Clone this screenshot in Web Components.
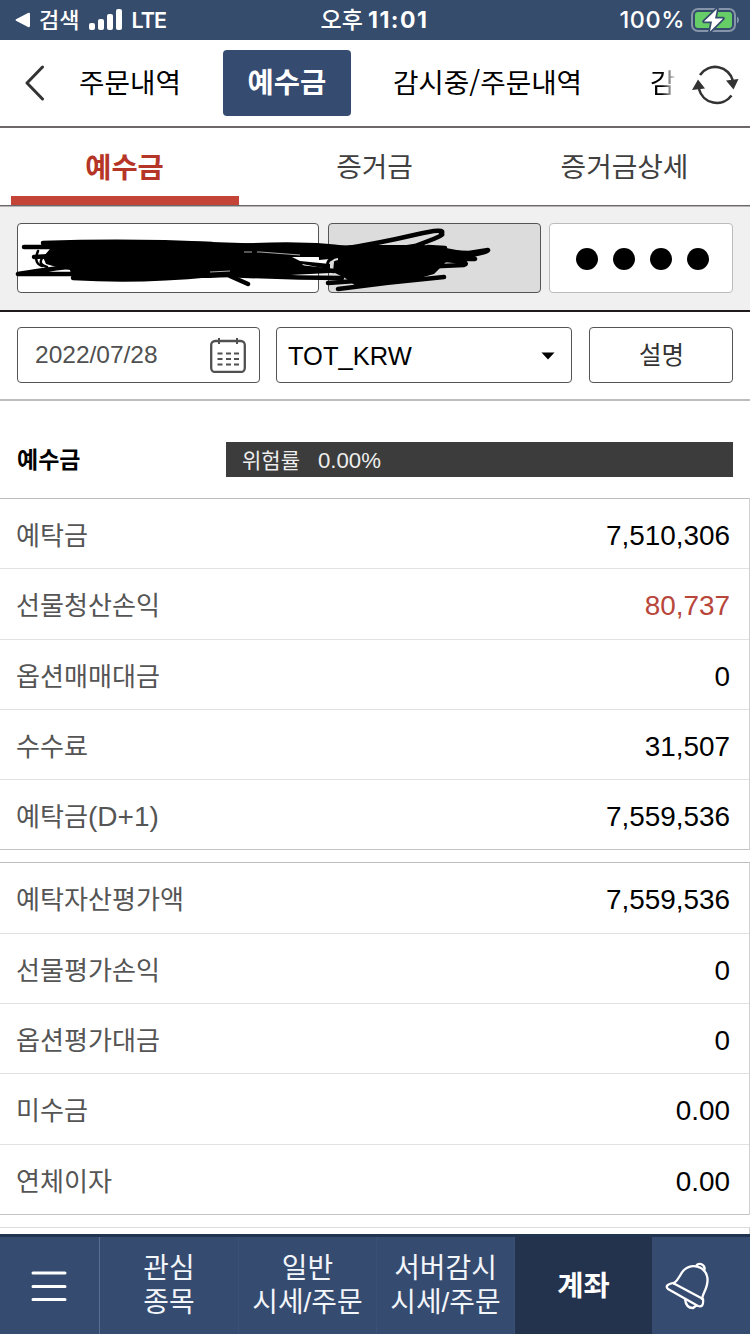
<!DOCTYPE html>
<html lang="ko">
<head>
<meta charset="utf-8">
<title>예수금</title>
<style>
  body {
    margin: 0;
    background: #fff;
    font-family: "Liberation Sans", "Noto Sans CJK KR", sans-serif;
  }
</style>
</head>
<body>
<account-app></account-app>

<script>
class StatusBar extends HTMLElement {
  constructor() {
    super();
    this.attachShadow({ mode: "open" });
  }

  static get styles() {
    return /* css */`
      :host {
        display: grid;
        grid-template-columns: 1fr auto 1fr;
        align-items: center;
        box-sizing: border-box;
        height: 40px;
        padding: 0 11px 0 15px;
        background: #364c6c;
        color: #fff;
        font: 500 22px/40px Inter, "Noto Sans CJK KR", sans-serif;
        white-space: nowrap;
      }

      .side {
        display: flex;
        align-items: center;
        height: 40px;
      }

      .right { justify-content: flex-end; }
      .arrow { margin-right: 9px; }
      .bars { margin: 0 8px 0 10px; }
      .net { font-weight: 600; font-size: 21.500px; letter-spacing: -0.9px; }
      .time { margin-right: 5px; font-size: 23px; }
      .level { font-size: 23.500px; letter-spacing: 0.5px; }
      .battery { margin-left: 6px; }
      b { font-weight: 700; font-size: 23px; letter-spacing: 1.500px; margin-left: -1px; }
      svg { display: block; }
    `;
  }

  connectedCallback() {
    this.shadowRoot.innerHTML = /* html */`
    <style>${StatusBar.styles}</style>
    <div class="side">
      <svg class="arrow" width="15" height="16" viewBox="0 0 15 16"><path d="M1 7.200 13 1q2-.8 2 1.200v11.600q0 2-2 1.200L1 8.800q-1-.8 0-1.600Z" fill="#fff"/></svg>
      <span>검색</span>
      <svg class="bars" width="34" height="22" viewBox="0 0 34 22" fill="#fff">
        <rect x="0" y="14" width="6" height="7" rx="2"/>
        <rect x="9" y="10" width="6" height="11" rx="2"/>
        <rect x="18" y="5" width="6" height="16" rx="2"/>
        <rect x="27" y="0" width="6" height="21" rx="2"/>
      </svg>
      <span class="net">LTE</span>
    </div>
    <div class="time">오후 <b>11:01</b></div>
    <div class="side right">
      <span class="level">100%</span>
      <svg class="battery" width="48" height="24" viewBox="0 0 48 24">
        <rect x="1" y="1" width="43" height="22" rx="6" fill="none" stroke="#8594a8" stroke-width="2"/>
        <path d="M46 8.500q2 1 2 3.500t-2 3.500Z" fill="#8594a8"/>
        <rect x="4" y="4" width="37" height="16" rx="3" fill="#65ce66"/>
        <path d="M26 1 13 13.500h8L19 23.500 32 10.500h-8L26 1Z" fill="#fff" stroke="#364c6c" stroke-width="3.500" paint-order="stroke" stroke-linejoin="round"/>
      </svg>
    </div>`;
  }
}

customElements.define("status-bar", StatusBar);

class MenuBar extends HTMLElement {
  constructor() {
    super();
    this.attachShadow({ mode: "open" });
  }

  static get styles() {
    return /* css */`
      :host {
        display: flex;
        align-items: center;
        box-sizing: border-box;
        height: 88px;
        border-bottom: 2px solid #6c686a;
        font-family: "Noto Sans CJK KR", sans-serif;
        font-size: 27.700px;
        color: #000;
      }

      .back { margin-left: 24px; }

      .track {
        display: flex;
        align-items: center;
        flex: none;
        width: 601px;
        margin-left: 33px;
        overflow: hidden;
        white-space: nowrap;
      }

      .on {
        flex: none;
        width: 128px;
        height: 66px;
        margin: 0 42px 0 42px;
        border-radius: 4px;
        background: #364b70;
        color: #fff;
        font-weight: 700;
        font-size: 28.500px;
        line-height: 61px;
        text-align: center;
      }

      .cut {
        margin-left: 68px;
        width: 26px;
        background: linear-gradient(to right, #000 45%, #fff);
        background-clip: text;
        -webkit-background-clip: text;
        color: transparent;
      }

      .item { line-height: 61px; margin-bottom: 4px; }
      .reload { margin: 3px 0 0 12px; }
      svg { display: block; flex: none; }
    `;
  }

  connectedCallback() {
    this.shadowRoot.innerHTML = /* html */`
    <style>${MenuBar.styles}</style>
    <svg class="back" width="22" height="36" viewBox="0 0 22 36"><path d="M18.500 2 3 18l15.500 16" fill="none" stroke="#333" stroke-width="3" stroke-linecap="round" stroke-linejoin="round"/></svg>
    <div class="track">
      <div class="item">주문내역</div>
      <div class="on">예수금</div>
      <div class="item">감시중/주문내역</div>
      <div class="item cut">감</div>
    </div>
    <svg class="reload" width="48" height="42" viewBox="0 0 48 42">
      <path d="M8 11A18.300 18.300 0 0 1 41 17M7 25A18.300 18.300 0 0 0 39.500 31.500" fill="none" stroke="#333" stroke-width="2.600"/>
      <path d="M34 16.500 46.500 15 41.500 25.500ZM0 26 13 24.500 6 15.500Z" fill="#333"/>
    </svg>`;
  }
}

customElements.define("menu-bar", MenuBar);

class TabStrip extends HTMLElement {
  constructor() {
    super();
    this.attachShadow({ mode: "open" });
  }

  static get styles() {
    return /* css */`
      :host {
        display: grid;
        grid-template-columns: repeat(3, 1fr);
        box-sizing: border-box;
        height: 78px;
        border-bottom: 1px solid #6c686a;
        box-shadow: 0 1px #b4b2b3;
        position: relative;
        z-index: 1;
      }

      div {
        box-sizing: border-box;
        height: 77px;
        padding-right: 1px;
        font-size: 27.800px;
        line-height: 80px;
        text-align: center;
        color: #404040;
      }

      .on {
        color: #b53527;
        font-size: 28.500px;
        font-weight: 700;
        background: linear-gradient(#c44538, #c44538) 11px 100% / 228px 9px no-repeat;
      }
    `;
  }

  connectedCallback() {
    const tabs = this.getAttribute("tabs").split(",");
    this.shadowRoot.innerHTML = /* html */`
    <style>${TabStrip.styles}</style>
    ${tabs.map((tab, i) => `<div class="${i ? "" : "on"}">${tab}</div>`).join("")}`;
  }
}

customElements.define("tab-strip", TabStrip);

class AccountBar extends HTMLElement {
  constructor() {
    super();
    this.attachShadow({ mode: "open" });
  }

  static get styles() {
    return /* css */`
      :host {
        display: flex;
        position: relative;
        box-sizing: border-box;
        height: 106px;
        padding: 17px;
        background: #f0f0f0;
        border-bottom: 2px solid #1f1b1c;
      }

      .box {
        box-sizing: border-box;
        height: 70px;
        border: 1px solid #555;
        border-radius: 4px;
        background: #fff;
      }

      .number { width: 302px; }
      .name { width: 213px; margin-left: 9px; background: #dcdcdc; }

      .pin {
        width: 184px;
        margin-left: 8px;
        border-color: #bbb;
        display: flex;
        align-items: center;
        justify-content: center;
        gap: 15px;
        padding-left: 3px;
      }

      .pin i { width: 22px; height: 22px; border-radius: 50%; background: #000; margin-top: 2px; }

      /* pen strokes hiding the account number and holder */
      .ink {
        position: absolute;
        left: 0;
        top: 0;
      }
    `;
  }

  connectedCallback() {
    this.shadowRoot.innerHTML = /* html */`
    <style>${AccountBar.styles}</style>
    <div class="box number"></div>
    <div class="box name"></div>
    <div class="box pin"><i></i><i></i><i></i><i></i></div>
    <svg class="ink" width="510" height="100" viewBox="0 206 510 100">
      <path d="M43 242Q130 239 212 242L330 246V273L290 275Q240 277 210 278L72 278 70 270 60 268 46 264 43 257 50 249 45 246Z"/>
      <path d="M325 246 360 245 424 245 446 248 462 251 466 257 446 262 434 274 413 280 370 286 356 286 345 278 333 272 334 262 328 256Z"/>
      <path d="M292 257H319V260L330 259V264L300 261ZM302 264 328 269 305 267Z" fill="#fff"/>
      <g fill="none" stroke="#000" stroke-width="4.500" stroke-linecap="round" stroke-linejoin="round">
        <path d="M24 247H75M43 243Q130 240 212 244M34 257 70 255M18 274Q35 271 75 266M18 274H75M73 278Q140 282 210 275M230 276 248 284"/>
        <path d="M38 251Q33 263 42 266M43 257Q37 264 47 267" stroke-width="2.500"/>
        <path d="M240 246Q290 243 326 246T376 256M230 275Q290 278 342 278M240 247 290 252 330 256M270 264 334 271"/>
        <path d="M342 249Q380 243 414 235T441 234Q448 234 415 246L376 252M428 247 445 248M435 252 469 253 488 250Q490 252 450 259M448 252 475 259H435M420 267 464 265Q472 262 445 260M328 283 370 280M338 289Q390 282 444 277"/>
      </g>
      <path d="M336 258Q326 259 328 266M345 261Q333 261 337 268" fill="none" stroke="#000" stroke-width="3"/>
      <path d="M332 265Q331 260 338 259" fill="none" stroke="#ddd" stroke-width="1.800"/>
      <path d="M244 252H252M257 252H260L300 255M210 272 230 271" fill="none" stroke="#aaa" stroke-width="1"/>
    </svg>`;
  }
}

customElements.define("account-bar", AccountBar);

class FilterBar extends HTMLElement {
  constructor() {
    super();
    this.attachShadow({ mode: "open" });
  }

  static get styles() {
    return /* css */`
      :host {
        display: flex;
        box-sizing: border-box;
        height: 89px;
        padding: 15px 17px 0;
        border-bottom: 2px solid #bdbdbd;
      }

      .box {
        display: flex;
        align-items: center;
        justify-content: space-between;
        box-sizing: border-box;
        height: 56px;
        border: 1px solid #555;
        border-radius: 4px;
        line-height: 54px;
      }

      .date { width: 243px; padding: 0 13px 0 17px; font-size: 24.500px; color: #505050; }
      .kind { width: 296px; margin: 0 17px 0 16px; padding: 2px 16px 0 11px; font-size: 25.500px; color: #000; }
      .help { width: 144px; justify-content: center; padding: 2px 0 0 1px; font-size: 24.500px; color: #333; }
      svg { display: block; }
    `;
  }

  connectedCallback() {
    this.shadowRoot.innerHTML = /* html */`
    <style>${FilterBar.styles}</style>
    <div class="box date">
      <span>2022/07/28</span>
      <svg width="36" height="36" viewBox="0 0 36 36" fill="none" stroke="#505050" stroke-width="2">
        <rect x="1.200" y="4" width="33.600" height="31" rx="4" stroke-width="2.300"/>
        <path d="M9 1v6M27 1v6"/>
        <path d="M7.500 16.500h5M16 16.500h5M24 16.500h5M7.500 22h5M16 22h5M24 22h5M7.500 27.500h5M16 27.500h5M24 27.500h5"/>
      </svg>
    </div>
    <div class="box kind">
      <span>TOT_KRW</span>
      <svg width="14" height="8" viewBox="0 0 14 8"><path d="M.5.5h13L7 7.500Z"/></svg>
    </div>
    <div class="box help">설명</div>`;
  }
}

customElements.define("filter-bar", FilterBar);

class RiskHeading extends HTMLElement {
  constructor() {
    super();
    this.attachShadow({ mode: "open" });
  }

  static get styles() {
    return /* css */`
      :host {
        display: flex;
        justify-content: space-between;
        align-items: center;
        box-sizing: border-box;
        height: 97px;
        padding: 20px 17px 0;
      }

      h2 { margin: 2px 0 0; font-size: 23px; font-weight: 700; line-height: 35px; }

      .risk {
        display: flex;
        gap: 18px;
        box-sizing: border-box;
        width: 507px;
        height: 35px;
        padding-left: 16px;
        background: #3c3c3c;
        color: #eee;
        font-size: 21px;
        line-height: 37px;
      }

      .rate { font-size: 22.200px; }
    `;
  }

  connectedCallback() {
    this.shadowRoot.innerHTML = /* html */`
    <style>${RiskHeading.styles}</style>
    <h2><slot></slot></h2>
    <div class="risk"><span>위험률</span><span class="rate">${this.getAttribute("rate")}</span></div>`;
  }
}

customElements.define("risk-heading", RiskHeading);

class BalanceRow extends HTMLElement {
  constructor() {
    super();
    this.attachShadow({ mode: "open" });
  }

  static get styles() {
    return /* css */`
      :host {
        display: flex;
        justify-content: space-between;
        box-sizing: border-box;
        height: 70.300px;
        padding: 0 19px 0 16px;
        border-bottom: 1px solid #e2e2e2;
        font-size: 26.100px;
        line-height: 74px;
        color: #555;
      }

      :host(:last-of-type) { border-bottom-color: #c4c4c4; }
      .latin { font-size: 28px; }
      .value { font-size: 27.900px; line-height: 73px; color: #000; }
      :host([up]) .value { color: #b8463b; }
    `;
  }

  connectedCallback() {
    const label = this.getAttribute("label").replace(/\(.*\)/, '<span class="latin">$&</span>');
    this.shadowRoot.innerHTML = /* html */`
    <style>${BalanceRow.styles}</style>
    <span>${label}</span>
    <span class="value"><slot></slot></span>`;
  }
}

customElements.define("balance-row", BalanceRow);

class BalanceGroup extends HTMLElement {
  constructor() {
    super();
    this.attachShadow({ mode: "open" });
  }

  static get styles() {
    return /* css */`
      :host {
        display: block;
        box-sizing: border-box;
        margin-bottom: 12px;
        border-top: 1px solid #bdbdbd;
        border-right: 1px solid #d0d0d0;
      }
    `;
  }

  connectedCallback() {
    this.shadowRoot.innerHTML = /* html */`
    <style>${BalanceGroup.styles}</style>
    <slot></slot>`;
  }
}

customElements.define("balance-group", BalanceGroup);

class BottomNav extends HTMLElement {
  constructor() {
    super();
    this.attachShadow({ mode: "open" });
  }

  static get styles() {
    return /* css */`
      :host {
        display: grid;
        grid-template-columns: 100px 139px 138px 138px 137px 98px;
        box-sizing: border-box;
        height: 100px;
        flex: none;
        border-top: 3px solid #203450;
        background: #364b70;
        color: #f2f5fa;
        font-size: 27.900px;
        line-height: 34px;
      }

      div {
        display: flex;
        align-items: center;
        justify-content: center;
        text-align: center;
        white-space: nowrap;
        box-sizing: border-box;
        border-right: 1px solid #3a5077;
      }

      .menu { border-right-color: #5b6e90; padding-right: 1px; }
      .on { background: #24334d; border: 0; color: #fff; font-weight: 700; font-size: 28.500px; }
      .bell { border: 0; justify-content: flex-start; padding-left: 13px; }
      svg { display: block; }
    `;
  }

  connectedCallback() {
    this.shadowRoot.innerHTML = /* html */`
    <style>${BottomNav.styles}</style>
    <div class="menu"><svg width="36" height="34" viewBox="0 0 36 34"><path d="M2 4h32M2 17.500h32M2 30.500h32" stroke="#fff" stroke-width="3" stroke-linecap="round"/></svg></div>
    <div>관심<br>종목</div>
    <div>일반<br>시세/주문</div>
    <div>서버감시<br>시세/주문</div>
    <div class="on">계좌</div>
    <div class="bell">
      <svg width="46" height="48" viewBox="665 1260 46 48" fill="none" stroke="#fff" stroke-width="2.300" stroke-linejoin="round">
        <path d="M673 1282C680 1277 679 1273 684 1268C692 1261 704 1264 707 1274C710 1284 702 1291 702 1298"/>
        <path d="M673 1281Q664 1283 668 1287L698 1304Q704 1306 703 1297L673 1281Z"/>
        <path d="M696 1265Q697 1261 701 1262Q706 1264 704 1269M685 1297Q686 1306 693 1306L697 1303"/>
      </svg>
    </div>`;
  }
}

customElements.define("bottom-nav", BottomNav);

class AccountApp extends HTMLElement {
  constructor() {
    super();
    this.attachShadow({ mode: "open" });
  }

  static get styles() {
    return /* css */`
      :host {
        display: flex;
        flex-direction: column;
        width: 750px;
        height: 1334px;
        overflow: hidden;
      }

      main { flex: 1; min-height: 0; overflow: hidden; }
      .rest { height: 20px; border-top-color: #dcdcdc; }
    `;
  }

  connectedCallback() {
    this.shadowRoot.innerHTML = /* html */`
    <style>${AccountApp.styles}</style>
    <status-bar></status-bar>
    <menu-bar></menu-bar>
    <tab-strip tabs="예수금,증거금,증거금상세"></tab-strip>
    <account-bar></account-bar>
    <filter-bar></filter-bar>
    <main>
      <risk-heading rate="0.00%">예수금</risk-heading>
      <balance-group>
        <balance-row label="예탁금">7,510,306</balance-row>
        <balance-row label="선물청산손익" up>80,737</balance-row>
        <balance-row label="옵션매매대금">0</balance-row>
        <balance-row label="수수료">31,507</balance-row>
        <balance-row label="예탁금(D+1)">7,559,536</balance-row>
      </balance-group>
      <balance-group>
        <balance-row label="예탁자산평가액">7,559,536</balance-row>
        <balance-row label="선물평가손익">0</balance-row>
        <balance-row label="옵션평가대금">0</balance-row>
        <balance-row label="미수금">0.00</balance-row>
        <balance-row label="연체이자">0.00</balance-row>
      </balance-group>
      <balance-group class="rest"></balance-group>
    </main>
    <bottom-nav></bottom-nav>`;
  }
}

customElements.define("account-app", AccountApp);
</script>
</body>
</html>
